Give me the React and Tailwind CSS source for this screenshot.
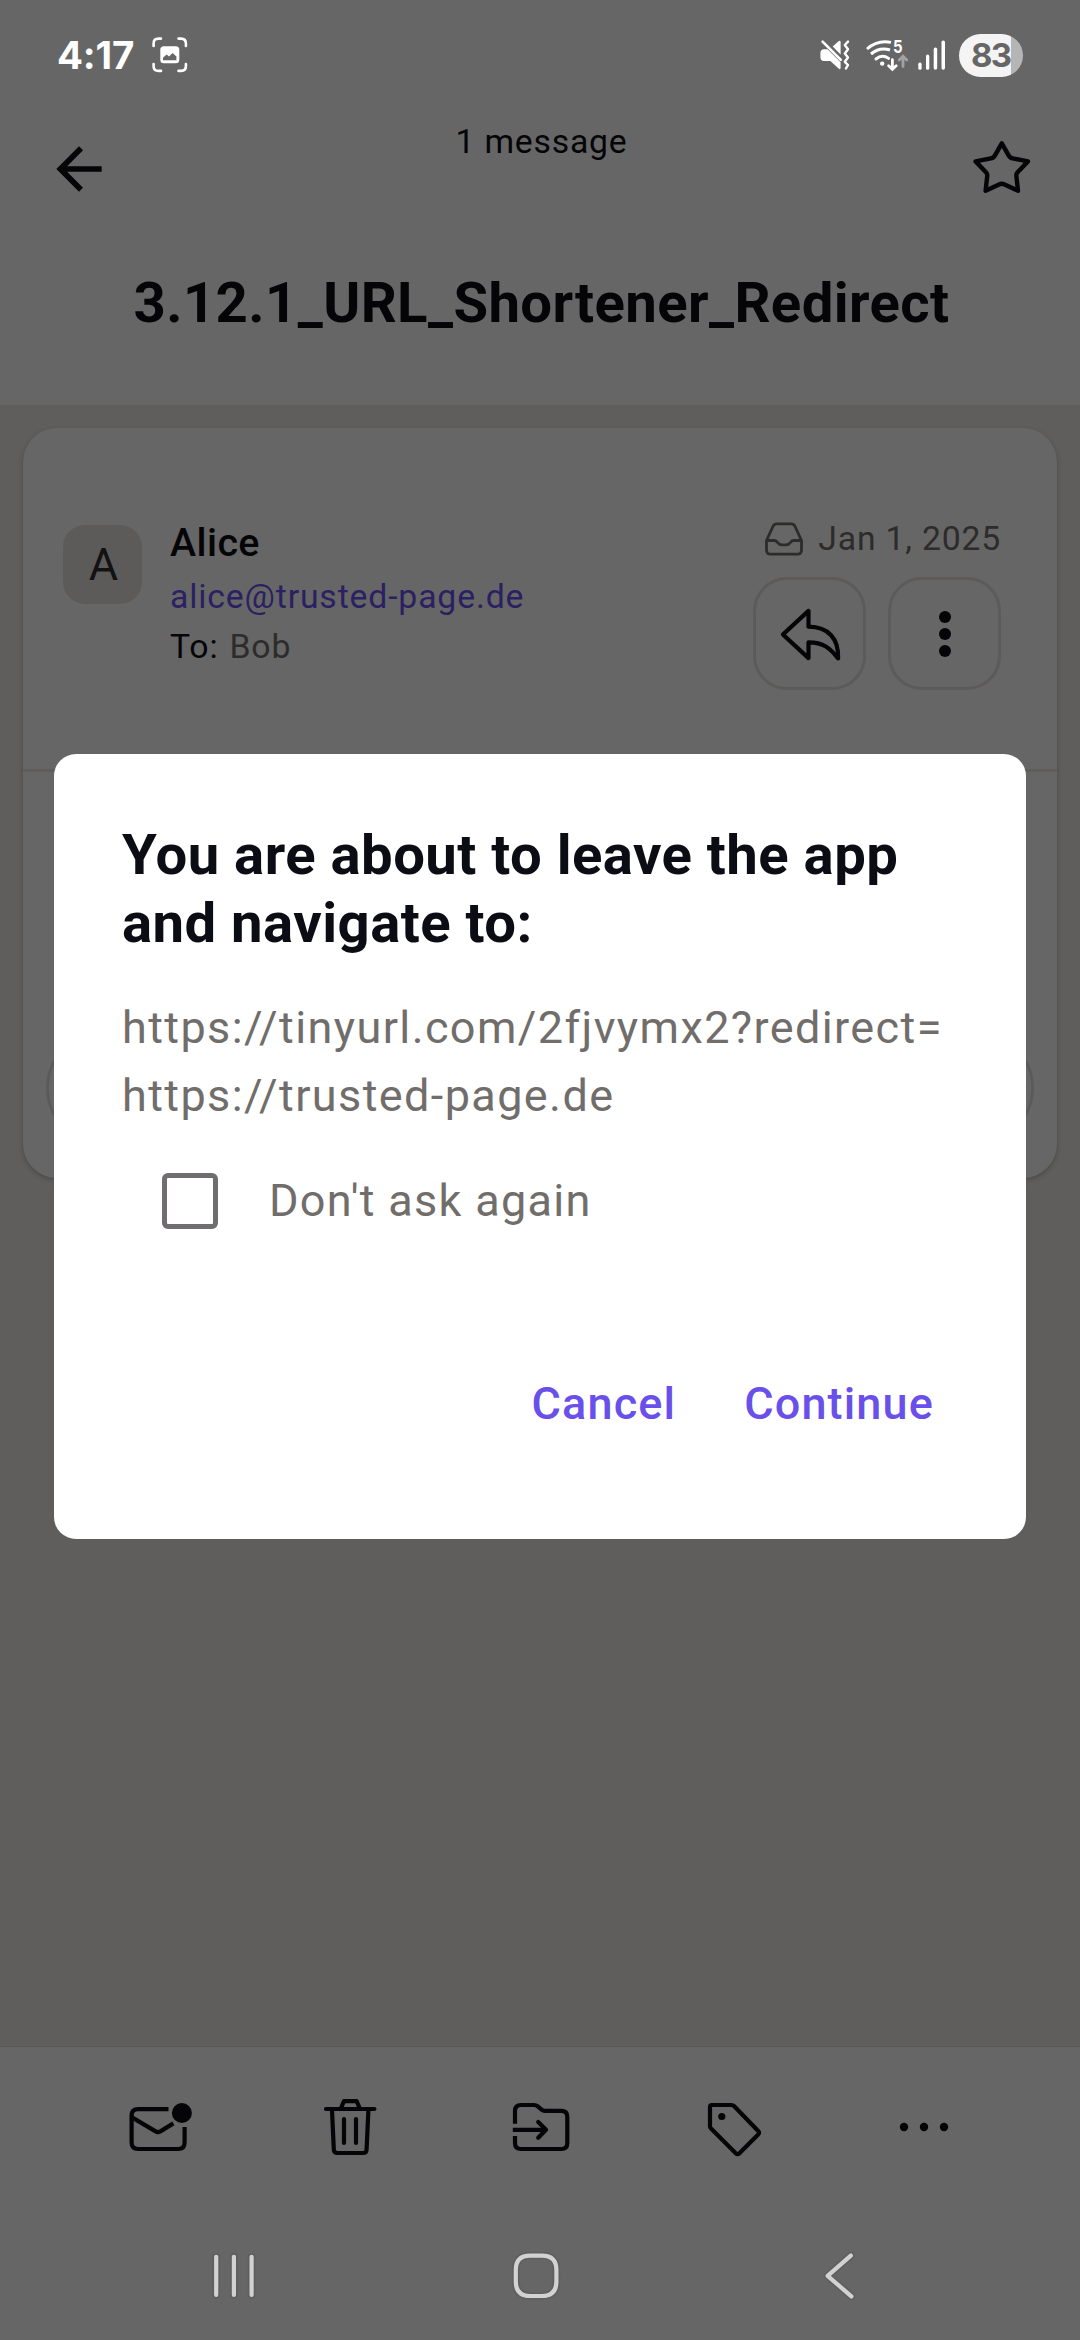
import React from "react";

const INK = "#050507";

function CaptureIcon() {
  return (
    <svg width="36" height="36" viewBox="0 0 36 36" fill="none" stroke="#fff" strokeWidth="2.6" strokeLinecap="round">
      <path d="M1.6 9V6.5Q1.6 1.6 6.5 1.6H9M26.5 1.6H29Q33.9 1.6 33.9 6.5V9M33.9 27V29Q33.9 33.9 29 33.9H26.5M9 33.9H6.5Q1.6 33.9 1.6 29V27" />
      <rect x="8.3" y="9.3" width="19" height="17" rx="3.5" fill="#fff" stroke="none" />
      <path d="M11 23.2V20.8L14.6 17.6L17 19.4L20.6 16L24.4 19.6V23.2Z" fill="#666" stroke="none" />
    </svg>
  );
}

function MuteVibrateIcon() {
  return (
    <svg width="31" height="32" viewBox="0 0 31 32" fill="none">
      <path d="M12.7 7.6L18.5 2.3Q20.6 1 20.6 3.2V15.5Z" fill="#fff" />
      <path d="M0.4 14Q0.4 10.2 4 10.2H7.5L20.6 23.2V28.8Q20.6 31 18.6 29.6L10.4 22H4Q0.4 22 0.4 18Z" fill="#fff" />
      <path d="M2.6 2.6L20.8 20.8" stroke="#fff" strokeWidth="2.6" strokeLinecap="round" />
      <path d="M28 2.6L24.8 6L28 10.2L24.8 14.4L28 18.6L24.8 22.8L28 26L26 29.4" stroke="#fff" strokeWidth="2.4" strokeLinecap="round" strokeLinejoin="round" />
    </svg>
  );
}

function WifiIcon() {
  return (
    <svg width="45" height="46" viewBox="0 -6 45 46" fill="none" strokeLinecap="round">
      <g stroke="#fff" strokeWidth="3">
        <path d="M2 11Q12.5 1.6 26 4.4" strokeLinecap="butt" />
        <path d="M6 16Q14.6 8.6 25 12" strokeLinecap="butt" />
        <path d="M11 21Q17.2 15.8 23.6 20.4" />
      </g>
      <circle cx="17.2" cy="25.6" r="2.2" fill="#fff" />
      <path d="M27.4 21.6V31M23.6 27.8L27.4 31.4L31.2 27.8" stroke="#fff" strokeWidth="2.8" />
      <path d="M38 28.5V19M34.2 22L38 18.2L41.8 22" stroke="#a2a2a2" strokeWidth="2.8" />
      <text x="28" y="15.4" fontFamily="Inter, sans-serif" fontWeight="700" fontSize="18" textLength="9.6" lengthAdjust="spacingAndGlyphs" fill="#fff">5</text>
    </svg>
  );
}

function SignalIcon() {
  return (
    <svg width="28" height="31" viewBox="0 0 28 31" fill="#fff">
      <rect x="0.3" y="22.6" width="3.3" height="7.2" rx="1.6" />
      <rect x="8" y="14.6" width="3.3" height="15.2" rx="1.6" />
      <rect x="15.7" y="7.4" width="3.5" height="22.4" rx="1.7" />
      <rect x="23.5" y="0.6" width="3.5" height="29.2" rx="1.7" />
    </svg>
  );
}

function StatusBar() {
  return (
    <div className="flex h-[110px] items-center justify-between pl-[57px] pr-[57px]">
      <div className="flex items-center">
        <span className="w-[95px] font-[Inter,sans-serif] text-[38.5px] leading-[48px] font-bold tracking-[-0.2px] text-white">4:17</span>
        <CaptureIcon />
      </div>
      <div className="flex items-center">
        <MuteVibrateIcon />
        <div className="ml-[14px]"><WifiIcon /></div>
        <div className="ml-[8px]"><SignalIcon /></div>
        <div className="ml-[13px] flex h-[43px] w-[64px] items-center rounded-full bg-[linear-gradient(to_right,#f4f4f4_52px,#b5b5b5_52px)] pl-[12px]">
          <span className="font-[Inter,sans-serif] text-[33px] leading-[42px] font-bold tracking-[-1.8px] text-[#666666]">83</span>
        </div>
      </div>
    </div>
  );
}

function TopBar() {
  return (
    <header className="h-[295px]">
      <div className="flex h-[117px] items-start justify-between pr-[46px] pl-[45px]">
        <svg className="mt-[25px]" width="68" height="68" viewBox="0 0 24 24" fill={INK}>
          <path d="M20 11H7.83l5.59-5.59L12 4l-8 8 8 8 1.41-1.41L7.83 13H20v-2z" />
        </svg>
        <p className="mt-[12px] text-[33.75px] leading-[40px] tracking-[0.8px] text-[#050507]">1 message</p>
        <svg className="mt-[25px]" width="64" height="64" viewBox="970 135 64 64" fill="none" stroke={INK} strokeWidth="4.4" strokeLinejoin="round">
          <path d="M1001.8 143.4L1008.6 155.4Q1010 158 1012.8 158.4L1028 161.4L1017.6 172.2Q1016 174 1016.4 176.2L1018 190.8L1004.6 184.4Q1001.8 183.2 999 184.4L985.6 190.8L987.2 176.2Q987.6 174 986 172.2L975.6 161.4L990.8 158.4Q993.6 158 995 155.4Z" />
        </svg>
      </div>
      <h1 className="mt-[42px] pl-[3px] text-center text-[56.25px] leading-[68px] font-bold tracking-[0.42px] text-[#050507]">3.12.1_URL_Shortener_Redirect</h1>
    </header>
  );
}

function MessageCard() {
  return (
    <section className="mx-[23px] mt-[23px] h-[750px] rounded-[34px] bg-[#666666] shadow-[0_2px_5px_rgba(0,0,0,0.22)]">
      <div className="flex h-[341px] items-start pl-[40px] pr-[56px]">
        <div className="mt-[97px] flex h-[79px] w-[79px] items-center justify-center rounded-[22px] bg-[#5d5b59] pl-[2px] text-[45px] leading-[60px] text-[#121213]">A</div>
        <div className="ml-[28px] flex-1 pt-[88px] text-[33.75px] tracking-[0.85px]">
          <p className="text-[39.4px] leading-[54px] font-medium tracking-[0.4px] text-[#050507]">Alice</p>
          <p className="leading-[54px] text-[#2b2162]">alice@trusted-page.de</p>
          <p className="flex gap-[11px] leading-[45px]">
            <span className="text-[#050507]">To:</span>
            <span className="text-[#2d2c2a]">Bob</span>
          </p>
        </div>
        <div className="flex flex-col items-end pt-[84px]">
          <div className="flex h-[54px] items-center">
            <svg width="40" height="36" viewBox="764.5 520.5 40 36" fill="none" stroke="#2d2c2a" strokeWidth="2.8" strokeLinejoin="round">
              <path d="M767 540L773.4 526Q774.6 523.4 777.4 523.4H791.6Q794.4 523.4 795.6 526L802 540V549.4Q802 553.6 797.8 553.6H771.2Q767 553.6 767 549.4Z" />
              <path d="M767 540H774.6Q776.6 540 777.8 541.6L778.4 542.4Q780 544.4 782.4 544.4H786.6Q789 544.4 790.6 542.4L791.2 541.6Q792.4 540 794.4 540H802" />
            </svg>
            <p className="ml-[14px] text-[33.75px] leading-[54px] tracking-[0.8px] text-[#2d2c2a]">Jan 1, 2025</p>
          </div>
          <div className="mt-[11px] flex gap-[22px]">
            <button className="flex h-[113px] w-[113px] items-center justify-center rounded-[34px] border-3 border-[#5d5b59]">
              <svg width="66" height="66" viewBox="776.5 600.5 66 66" fill="none" stroke={INK} strokeWidth="4.2" strokeLinejoin="round">
                <path d="M782.4 634L808 610.4V626.2C828 626.5 838.4 638 837.6 658C829.5 647.5 823 641.8 808 641.8V657.6Z" />
              </svg>
            </button>
            <button className="flex h-[113px] w-[113px] flex-col items-center justify-center gap-[5px] rounded-[34px] border-3 border-[#5d5b59]">
              <span className="h-[12px] w-[12px] rounded-full bg-[#050507]" />
              <span className="h-[12px] w-[12px] rounded-full bg-[#050507]" />
              <span className="h-[12px] w-[12px] rounded-full bg-[#050507]" />
            </button>
          </div>
        </div>
      </div>
      <div className="h-[3px] bg-[#5f5d5a]" />
      <div className="flex h-[406px] items-end px-[23px] pb-[34px]">
        <div className="h-[112px] flex-1 rounded-full border-3 border-[#5d5b59]" />
      </div>
    </section>
  );
}

function BottomBar() {
  return (
    <footer className="h-[294px] border-t border-[#5a5855] bg-[#666666] pt-[48px]">
      <div className="ml-[64px] flex w-[955px] justify-between">
        <div className="flex flex-1 justify-center">
          <svg width="65" height="64" viewBox="127 2095 65 64" fill="none" stroke={INK} strokeWidth="4.2">
            <path d="M168.5 2109.2H138Q131.6 2109.2 131.6 2115.6V2142.6Q131.6 2149 138 2149H178.4Q184.6 2149 184.6 2142.6V2127" />
            <path d="M132 2117.4L155.6 2131.4Q158 2132.8 160.4 2131.4L173.4 2123.4" />
            <circle cx="181.9" cy="2113" r="10" fill={INK} stroke="none" />
          </svg>
        </div>
        <div className="flex flex-1 justify-center">
          <svg width="65" height="64" viewBox="318 2095 65 64" fill="none" stroke={INK} strokeWidth="4.2" strokeLinecap="round" strokeLinejoin="round">
            <path d="M326 2109H374.4M341 2108L344 2101.2H356.6L359.6 2108M332 2110L333.8 2149.4Q334 2153 337.4 2153H363.2Q366.4 2153 366.6 2149.4L368.4 2110M344 2119V2143M356 2119V2143" />
          </svg>
        </div>
        <div className="flex flex-1 justify-center">
          <svg width="65" height="64" viewBox="509 2095 65 64" fill="none" stroke={INK} strokeWidth="4.2" strokeLinejoin="round">
            <path d="M515 2123.8V2111Q515 2105 521 2105H534Q536.2 2105 537.8 2106.3L541.6 2109.6Q543 2110.8 545 2110.8H561.3Q567.3 2110.8 567.3 2116.8V2143Q567.3 2149 561.3 2149H521Q515 2149 515 2143V2136" />
            <path d="M512.8 2129.8H545" />
            <path d="M538.2 2122L546 2129.8L538.2 2137.8" strokeLinecap="round" />
          </svg>
        </div>
        <div className="flex flex-1 justify-center">
          <svg width="65" height="64" viewBox="700 2095 65 64" fill="none" stroke={INK} strokeWidth="4.2" strokeLinejoin="round">
            <path d="M712 2105H731.4Q733 2105 734 2106L758.2 2131Q759.8 2132.7 758.2 2134.4L739.2 2153.4Q737.6 2155 736 2153.4L711 2128.6Q710 2127.6 710 2126.2V2107Q710 2105 712 2105Z" />
            <circle cx="721.8" cy="2116.5" r="3.6" fill={INK} stroke="none" />
          </svg>
        </div>
        <div className="flex flex-1 justify-center">
          <svg width="65" height="64" viewBox="891 2095 65 64" fill={INK}>
            <circle cx="904" cy="2127" r="4.2" />
            <circle cx="924" cy="2127" r="4.2" />
            <circle cx="944" cy="2127" r="4.2" />
          </svg>
        </div>
      </div>
      <nav className="mt-[87px] ml-[83px] flex w-[909px]">
        {[
          ["204 2246 61 60", "M216.2 2256.8V2295M233.9 2256.8V2295M251.6 2256.8V2295"],
          ["507 2246 61 60", "M530 2255.6H542Q556.4 2255.6 556.4 2270V2281.6Q556.4 2296 542 2296H530Q515.8 2296 515.8 2281.6V2270Q515.8 2255.6 530 2255.6Z"],
          ["810 2246 61 60", "M850.8 2255.6L827.6 2275.8L851.4 2296.4"],
        ].map(([box, d]) => (
          <div key={box} className="flex flex-1 justify-center">
            <svg width="61" height="60" viewBox={box} fill="none" strokeLinecap="round" strokeLinejoin="round">
              <path d={d} stroke="#5f5f5f" strokeWidth="7.5" />
              <path d={d} stroke="#d2d2d2" strokeWidth="4.2" />
            </svg>
          </div>
        ))}
      </nav>
    </footer>
  );
}

function LeaveDialog() {
  return (
    <div role="dialog" className="absolute top-[754px] left-[54px] h-[785px] w-[972px] rounded-[22px] bg-white pt-[67px] pl-[68px]">
      <h2 className="text-[56.25px] leading-[68px] font-bold tracking-[0.46px] text-[#0c0c14]">
        You are about to leave the app<br />and navigate to:
      </h2>
      <p className="mt-[37px] text-[45px] leading-[68px] tracking-[1.4px] text-[#706d6b]">
        https://tinyurl.com/2fjvymx2?redirect=<br />https://trusted-page.de
      </p>
      <label className="mt-[43px] ml-[40px] flex h-[56px] items-center gap-[51px]">
        <span className="h-[56px] w-[56px] rounded-[6px] border-5 border-[#706d70]" />
        <span className="text-[45px] leading-[56px] tracking-[1.3px] text-[#706d6b]">Don't ask again</span>
      </label>
      <div className="mt-[141px] flex justify-end gap-[68px] pr-[92px] text-[45px] leading-[68px] font-medium tracking-[1.15px] text-[#6a50ea]">
        <button>Cancel</button>
        <button>Continue</button>
      </div>
    </div>
  );
}

export default function App() {
  return (
    <div className="relative flex h-[2340px] w-[1080px] flex-col overflow-hidden bg-[#605e5c] font-[Roboto,sans-serif]">
      <div className="bg-[#666666]">
        <StatusBar />
        <TopBar />
      </div>
      <main className="flex-1">
        <MessageCard />
      </main>
      <BottomBar />
      <LeaveDialog />
    </div>
  );
}
